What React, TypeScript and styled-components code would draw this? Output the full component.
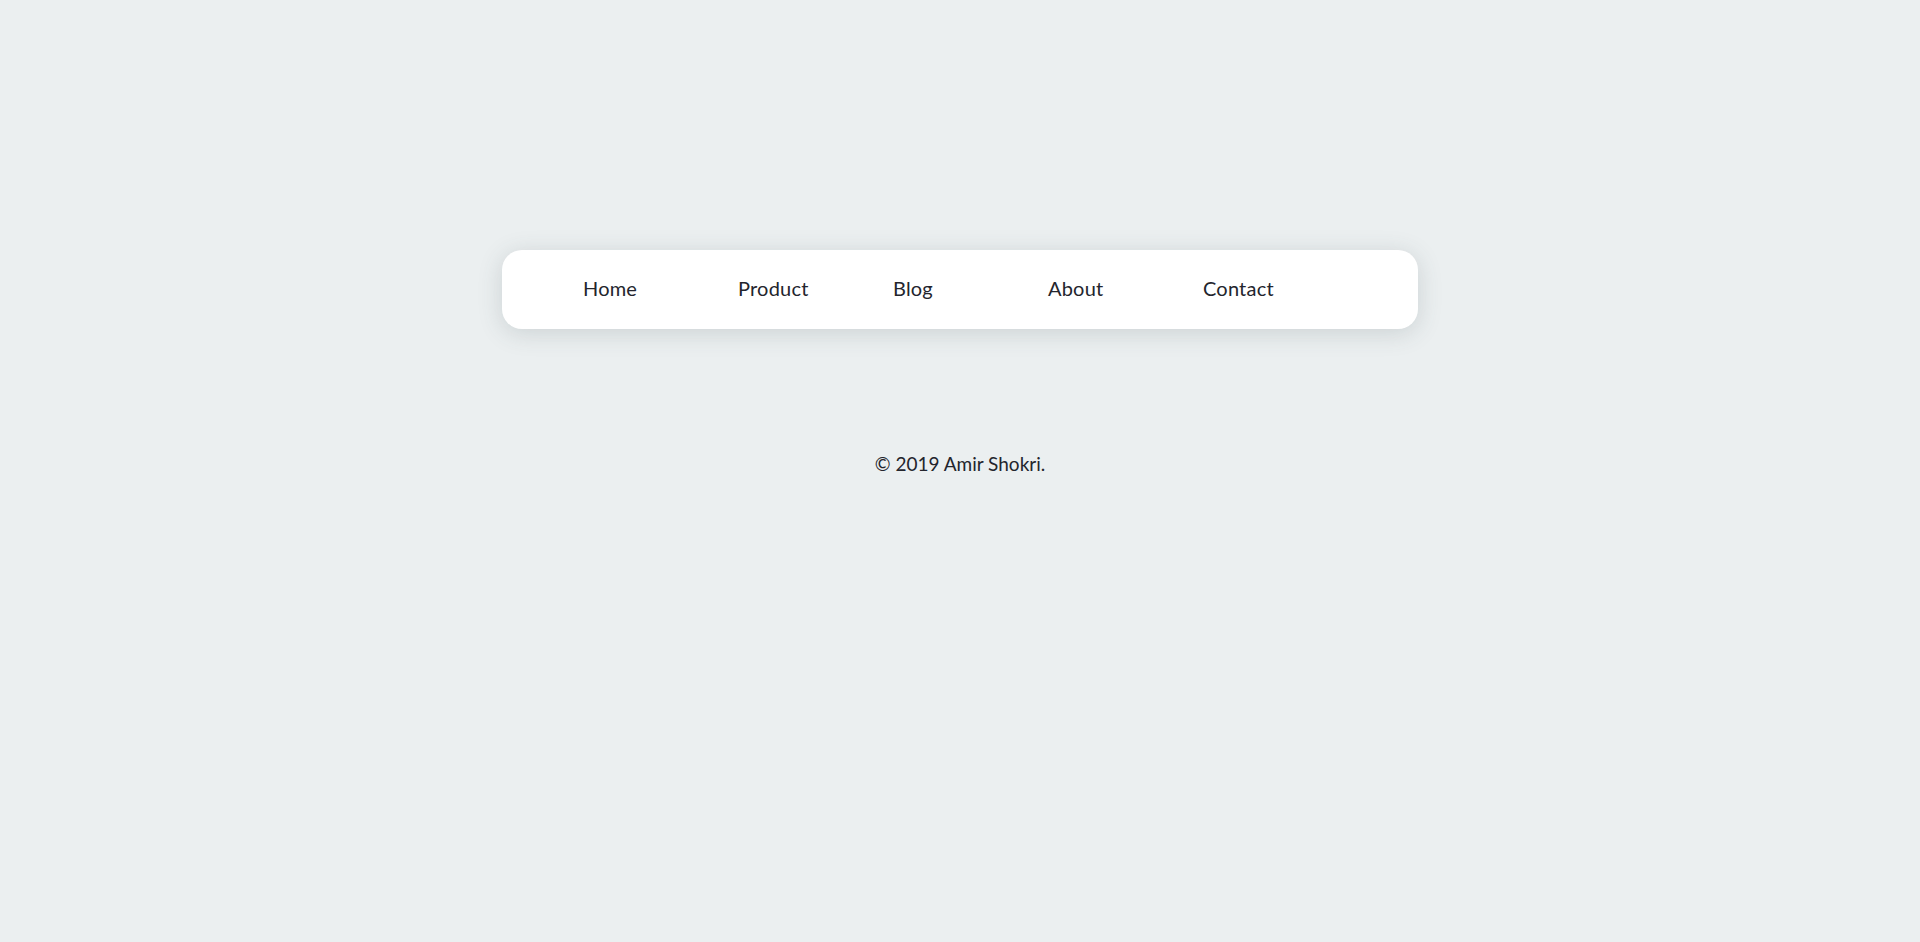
import React from 'react';
import styled, { createGlobalStyle } from 'styled-components';

const GlobalStyle = createGlobalStyle`
  html, body {
    margin: 0;
    padding: 0;
    background-color: #ebeff0;
    font-family: Lato, "Noto Sans", sans-serif;
    color: #1c1e26;
  }
`;

const links = ['Home', 'Product', 'Blog', 'About', 'Contact'];

export default function App() {
  return (
    <>
      <GlobalStyle />
      <Page>
        <NavBar>
          <NavList>
            {links.map((l) => (
              <NavItem key={l}>
                <NavLink href="#">{l}</NavLink>
              </NavItem>
            ))}
          </NavList>
        </NavBar>
        <Footer>© 2019 Amir Shokri.</Footer>
      </Page>
    </>
  );
}

const Page = styled.div`
  display: flex;
  flex-direction: column;
  align-items: center;
  padding-top: 250px;
  min-height: 942px;
  box-sizing: border-box;
`;

const NavBar = styled.nav`
  width: 916px;
  height: 79px;
  background-color: #fff;
  border-radius: 20px;
  box-shadow: 0 4px 24px rgba(60, 75, 85, 0.18);
  box-sizing: border-box;
  padding: 0 0 4px 81px;
  display: flex;
  align-items: center;
`;

const NavList = styled.ul`
  list-style: none;
  margin: 0;
  padding: 0;
  display: flex;
`;

const NavItem = styled.li`
  width: 155px;
`;

const NavLink = styled.a`
  font-size: 20px;
  letter-spacing: 0.2px;
  color: #23252d;
  text-decoration: none;
`;

const Footer = styled.p`
  margin: 124px 0 0;
  font-size: 19px;
  line-height: 22px;
  color: #23252d;
`;
